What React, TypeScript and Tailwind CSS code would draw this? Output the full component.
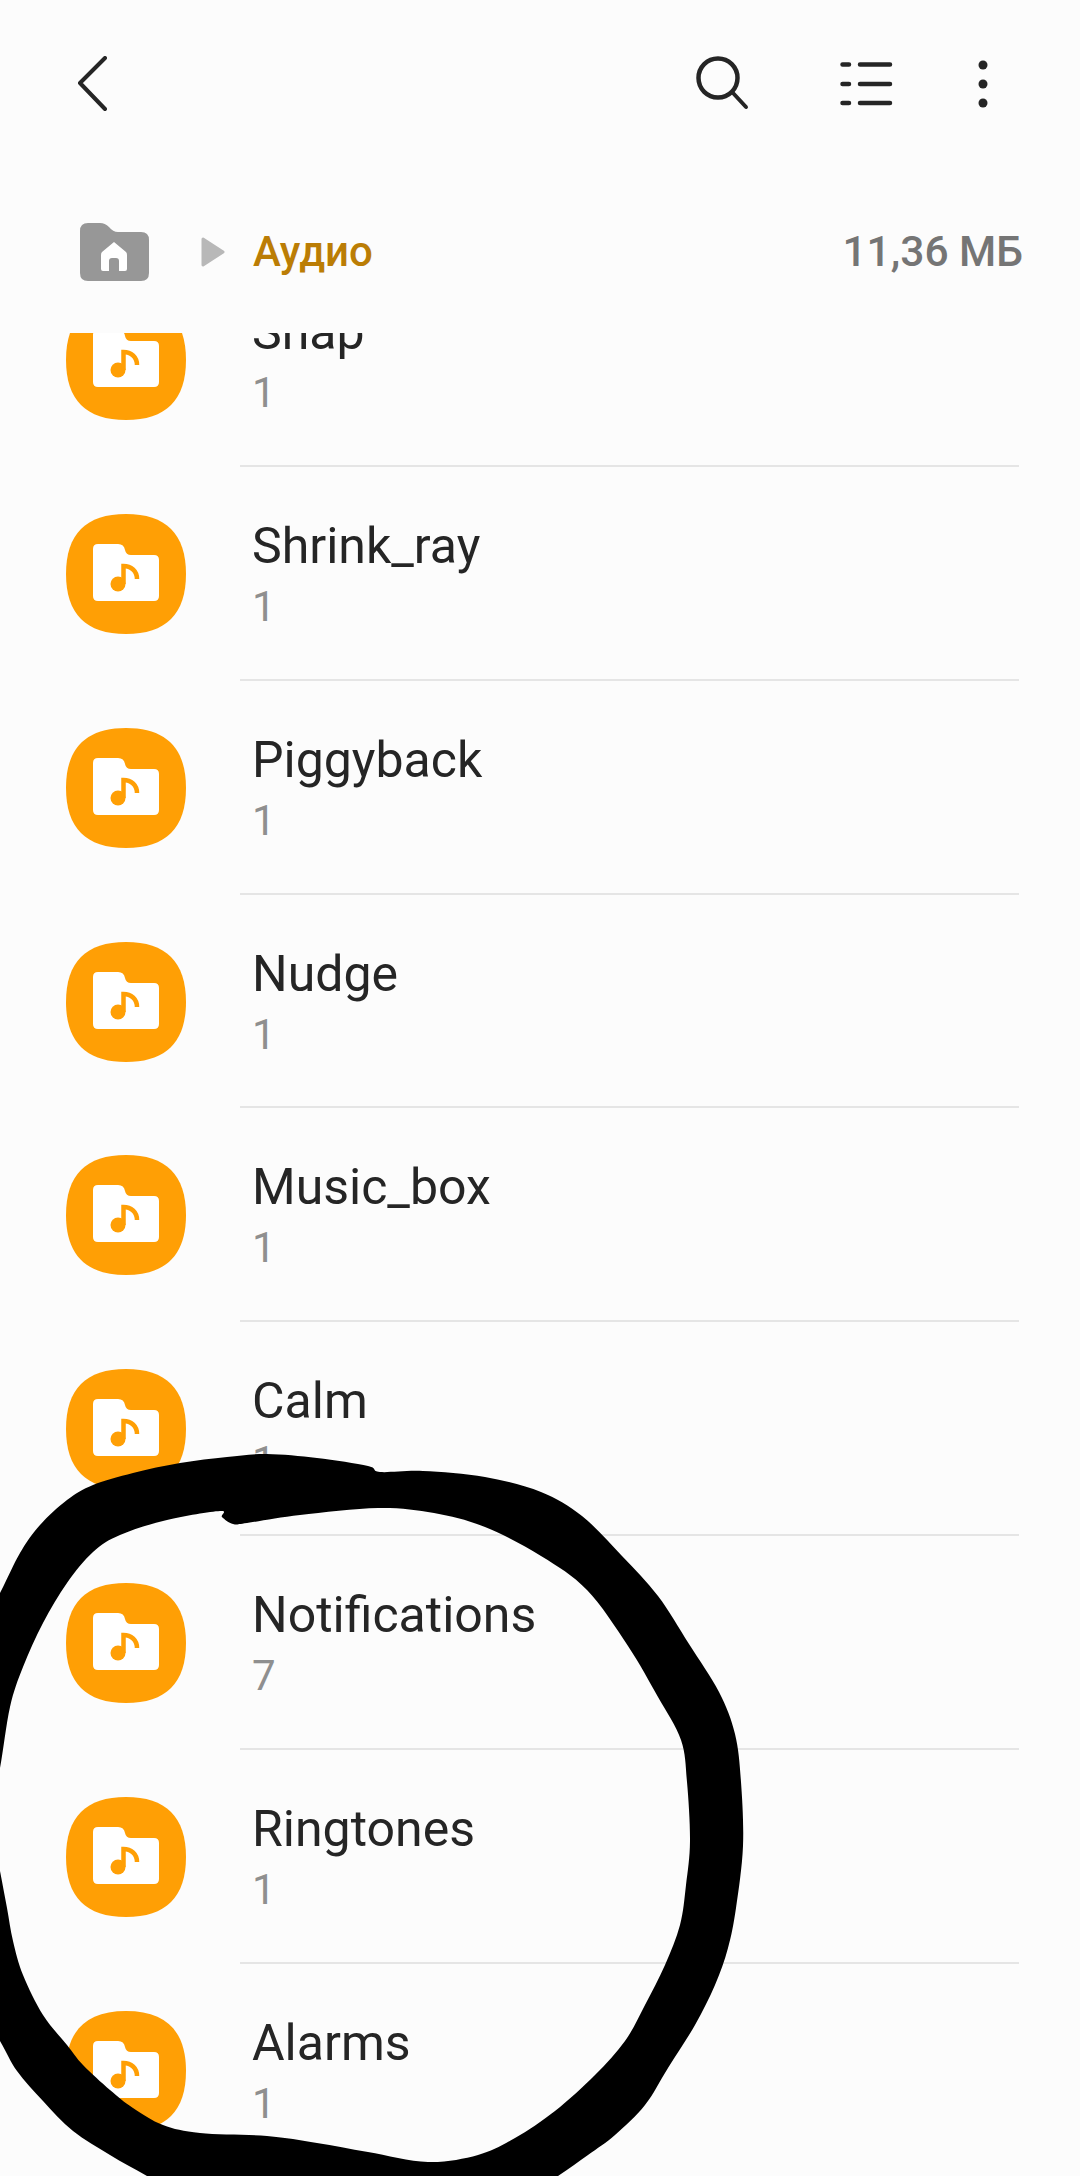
const folders = [
  { name: 'Snap', count: 1 },
  { name: 'Shrink_ray', count: 1 },
  { name: 'Piggyback', count: 1 },
  { name: 'Nudge', count: 1 },
  { name: 'Music_box', count: 1 },
  { name: 'Calm', count: 1 },
  { name: 'Notifications', count: 7 },
  { name: 'Ringtones', count: 1 },
  { name: 'Alarms', count: 1 },
];

// hand-drawn marker ring, traced clockwise round the outside, back round the inside.
// the points past the page edge keep the stroke from rounding off where it leaves the screen
const ring: [number, number][] = [
  [-40, 1670], [0, 1593], [20, 1553], [40, 1525], [67, 1500], [93, 1485], [133, 1473], [180, 1463], [227, 1457], [267, 1454],
  [317, 1458], [368, 1466], [380, 1472], [423, 1471], [485, 1477], [541, 1492], [582, 1516], [622, 1556], [658, 1596],
  [689, 1644], [719, 1692], [735, 1734], [741, 1782], [743, 1846], [736, 1908], [728, 1948], [715, 1985], [695, 2025],
  [668, 2068], [645, 2105], [615, 2135], [588, 2155], [558, 2176], [520, 2200], [190, 2200], [147, 2176], [110, 2155], [73, 2131], [43, 2101],
  [17, 2071], [0, 2041], [-30, 1990], [-30, 1800], [-8, 1830], [0, 1871], [7, 1908], [13, 1941], [23, 1975], [43, 2015], [67, 2045], [83, 2065], [110, 2090],
  [133, 2108], [163, 2125], [200, 2133], [267, 2136], [317, 2143], [368, 2152], [428, 2162], [478, 2155], [515, 2138],
  [555, 2111], [595, 2075], [625, 2041], [645, 2005], [665, 1965], [680, 1925], [686, 1885], [690, 1841], [687, 1782],
  [681, 1740], [658, 1697], [628, 1646], [587, 1590], [541, 1556], [485, 1527], [434, 1513], [378, 1508], [300, 1515],
  [247, 1523], [233, 1524], [222, 1517], [220, 1511], [167, 1520], [120, 1535], [93, 1552], [67, 1583], [43, 1623],
  [23, 1667], [10, 1707], [0, 1768], [-10, 1810],
];

const ringPath = () => {
  const n = ring.length;
  let d = `M${ring[0][0]} ${ring[0][1]}`;
  for (let i = 0; i < n; i++) {
    const p0 = ring[(i - 1 + n) % n];
    const p1 = ring[i];
    const p2 = ring[(i + 1) % n];
    const p3 = ring[(i + 2) % n];
    const c1x = p1[0] + (p2[0] - p0[0]) / 6;
    const c1y = p1[1] + (p2[1] - p0[1]) / 6;
    const c2x = p2[0] - (p3[0] - p1[0]) / 6;
    const c2y = p2[1] - (p3[1] - p1[1]) / 6;
    d += ` C${c1x} ${c1y} ${c2x} ${c2y} ${p2[0]} ${p2[1]}`;
  }
  return d + ' Z';
};

const FolderIcon = () => (
  <svg width="120" height="120" viewBox="0 0 120 120" className="shrink-0">
    <path d="M60 0C100 0 120 20 120 60C120 100 100 120 60 120C20 120 0 100 0 60C0 20 20 0 60 0Z" fill="#ff9f05" />
    <path
      d="M32 30H52Q58 30 59 36Q60 41 65 41H88Q93 41 93 46V82Q93 87 88 87H32Q27 87 27 82V35Q27 30 32 30Z"
      fill="#ffffff"
    />
    <circle cx="52" cy="70" r="7.5" fill="#ff9f05" />
    <path d="M57.5 70V52C65 52 71 57 71 65" fill="none" stroke="#ff9f05" strokeWidth="4.5" />
  </svg>
);

export default function App() {
  return (
    <div className="h-[2176px] w-[1080px] overflow-hidden relative bg-[#fcfcfc] font-['Roboto',sans-serif]">
      <div className="h-[168px] flex items-center pl-[76px] pr-[92px]">
        <svg width="34" height="56" viewBox="0 0 34 56" className="shrink-0">
          <path d="M29 2L4 27L29 53" fill="none" stroke="#252525" strokeWidth="4" strokeLinecap="round" strokeLinejoin="round" />
        </svg>
        <div className="ml-auto flex items-center">
          <svg width="54" height="60" viewBox="0 0 54 60">
            <circle cx="23" cy="24" r="19.5" fill="none" stroke="#252525" strokeWidth="4.5" />
            <path d="M38 39L51 53" stroke="#252525" strokeWidth="4" strokeLinecap="round" />
          </svg>
          <svg width="54" height="48" viewBox="0 0 54 48" className="ml-[91px]">
            <g stroke="#252525" strokeWidth="4.5" strokeLinecap="round">
              <path d="M2.5 4.5H9M20 4.5H50" />
              <path d="M2.5 24H9M20 24H50" />
              <path d="M2.5 43H9M20 43H50" />
            </g>
          </svg>
          <svg width="10" height="48" viewBox="0 0 10 48" className="ml-[84px]">
            <circle cx="5" cy="5" r="4.5" fill="#252525" />
            <circle cx="5" cy="24" r="4.5" fill="#252525" />
            <circle cx="5" cy="43" r="4.5" fill="#252525" />
          </svg>
        </div>
      </div>

      <div className="h-[165px] pt-[3px] pl-[80px] pr-[57px] flex items-center">
        <svg width="69" height="58" viewBox="0 0 69 58" className="shrink-0">
          <path d="M8 0H20Q25 0 29 4Q33 9 38 9H61Q69 9 69 17V50Q69 58 61 58H8Q0 58 0 50V8Q0 0 8 0Z" fill="#979797" />
          <path
            d="M34 19L46 29Q47 30 47 32V46Q47 48 45 48H39V38Q39 35 36 35H32Q29 35 29 38V48H23Q21 48 21 46V32Q21 30 22 29Z"
            fill="#ffffff"
          />
        </svg>
        <svg width="24" height="30" viewBox="0 0 24 30" className="ml-[52px] shrink-0">
          <path d="M2 2L22 15L2 28Z" fill="#b8b8b8" stroke="#b8b8b8" strokeWidth="3" strokeLinejoin="round" />
        </svg>
        <span className="ml-[28px] text-[42px] leading-[48px] font-medium text-[#bb7d05]">Аудио</span>
        <span className="ml-auto text-[42.5px] leading-[48px] font-medium text-[#757575]">11,36 МБ</span>
      </div>

      <div className="h-[1843px] overflow-hidden">
        <div className="-mt-[80px]">
          {folders.map((f) => (
            <div key={f.name} className="h-[213.86px] flex items-center pl-[66px] relative">
              <FolderIcon />
              <div className="ml-[66px] flex flex-col">
                <span className="text-[50px] leading-[60px] -mt-[1px] text-[#252525]">{f.name}</span>
                <span className="text-[42px] leading-[50px] mt-[6px] -mb-[1px] text-[#8f8f8f]">{f.count}</span>
              </div>
              <div className="absolute left-[240px] w-[779px] bottom-0 h-[2px] bg-[#e5e5e5]" />
            </div>
          ))}
        </div>
      </div>

      <svg className="absolute inset-0 pointer-events-none" width="1080" height="2176" viewBox="0 0 1080 2176">
        <path d={ringPath()} fill="#000000" />
      </svg>
    </div>
  );
}
